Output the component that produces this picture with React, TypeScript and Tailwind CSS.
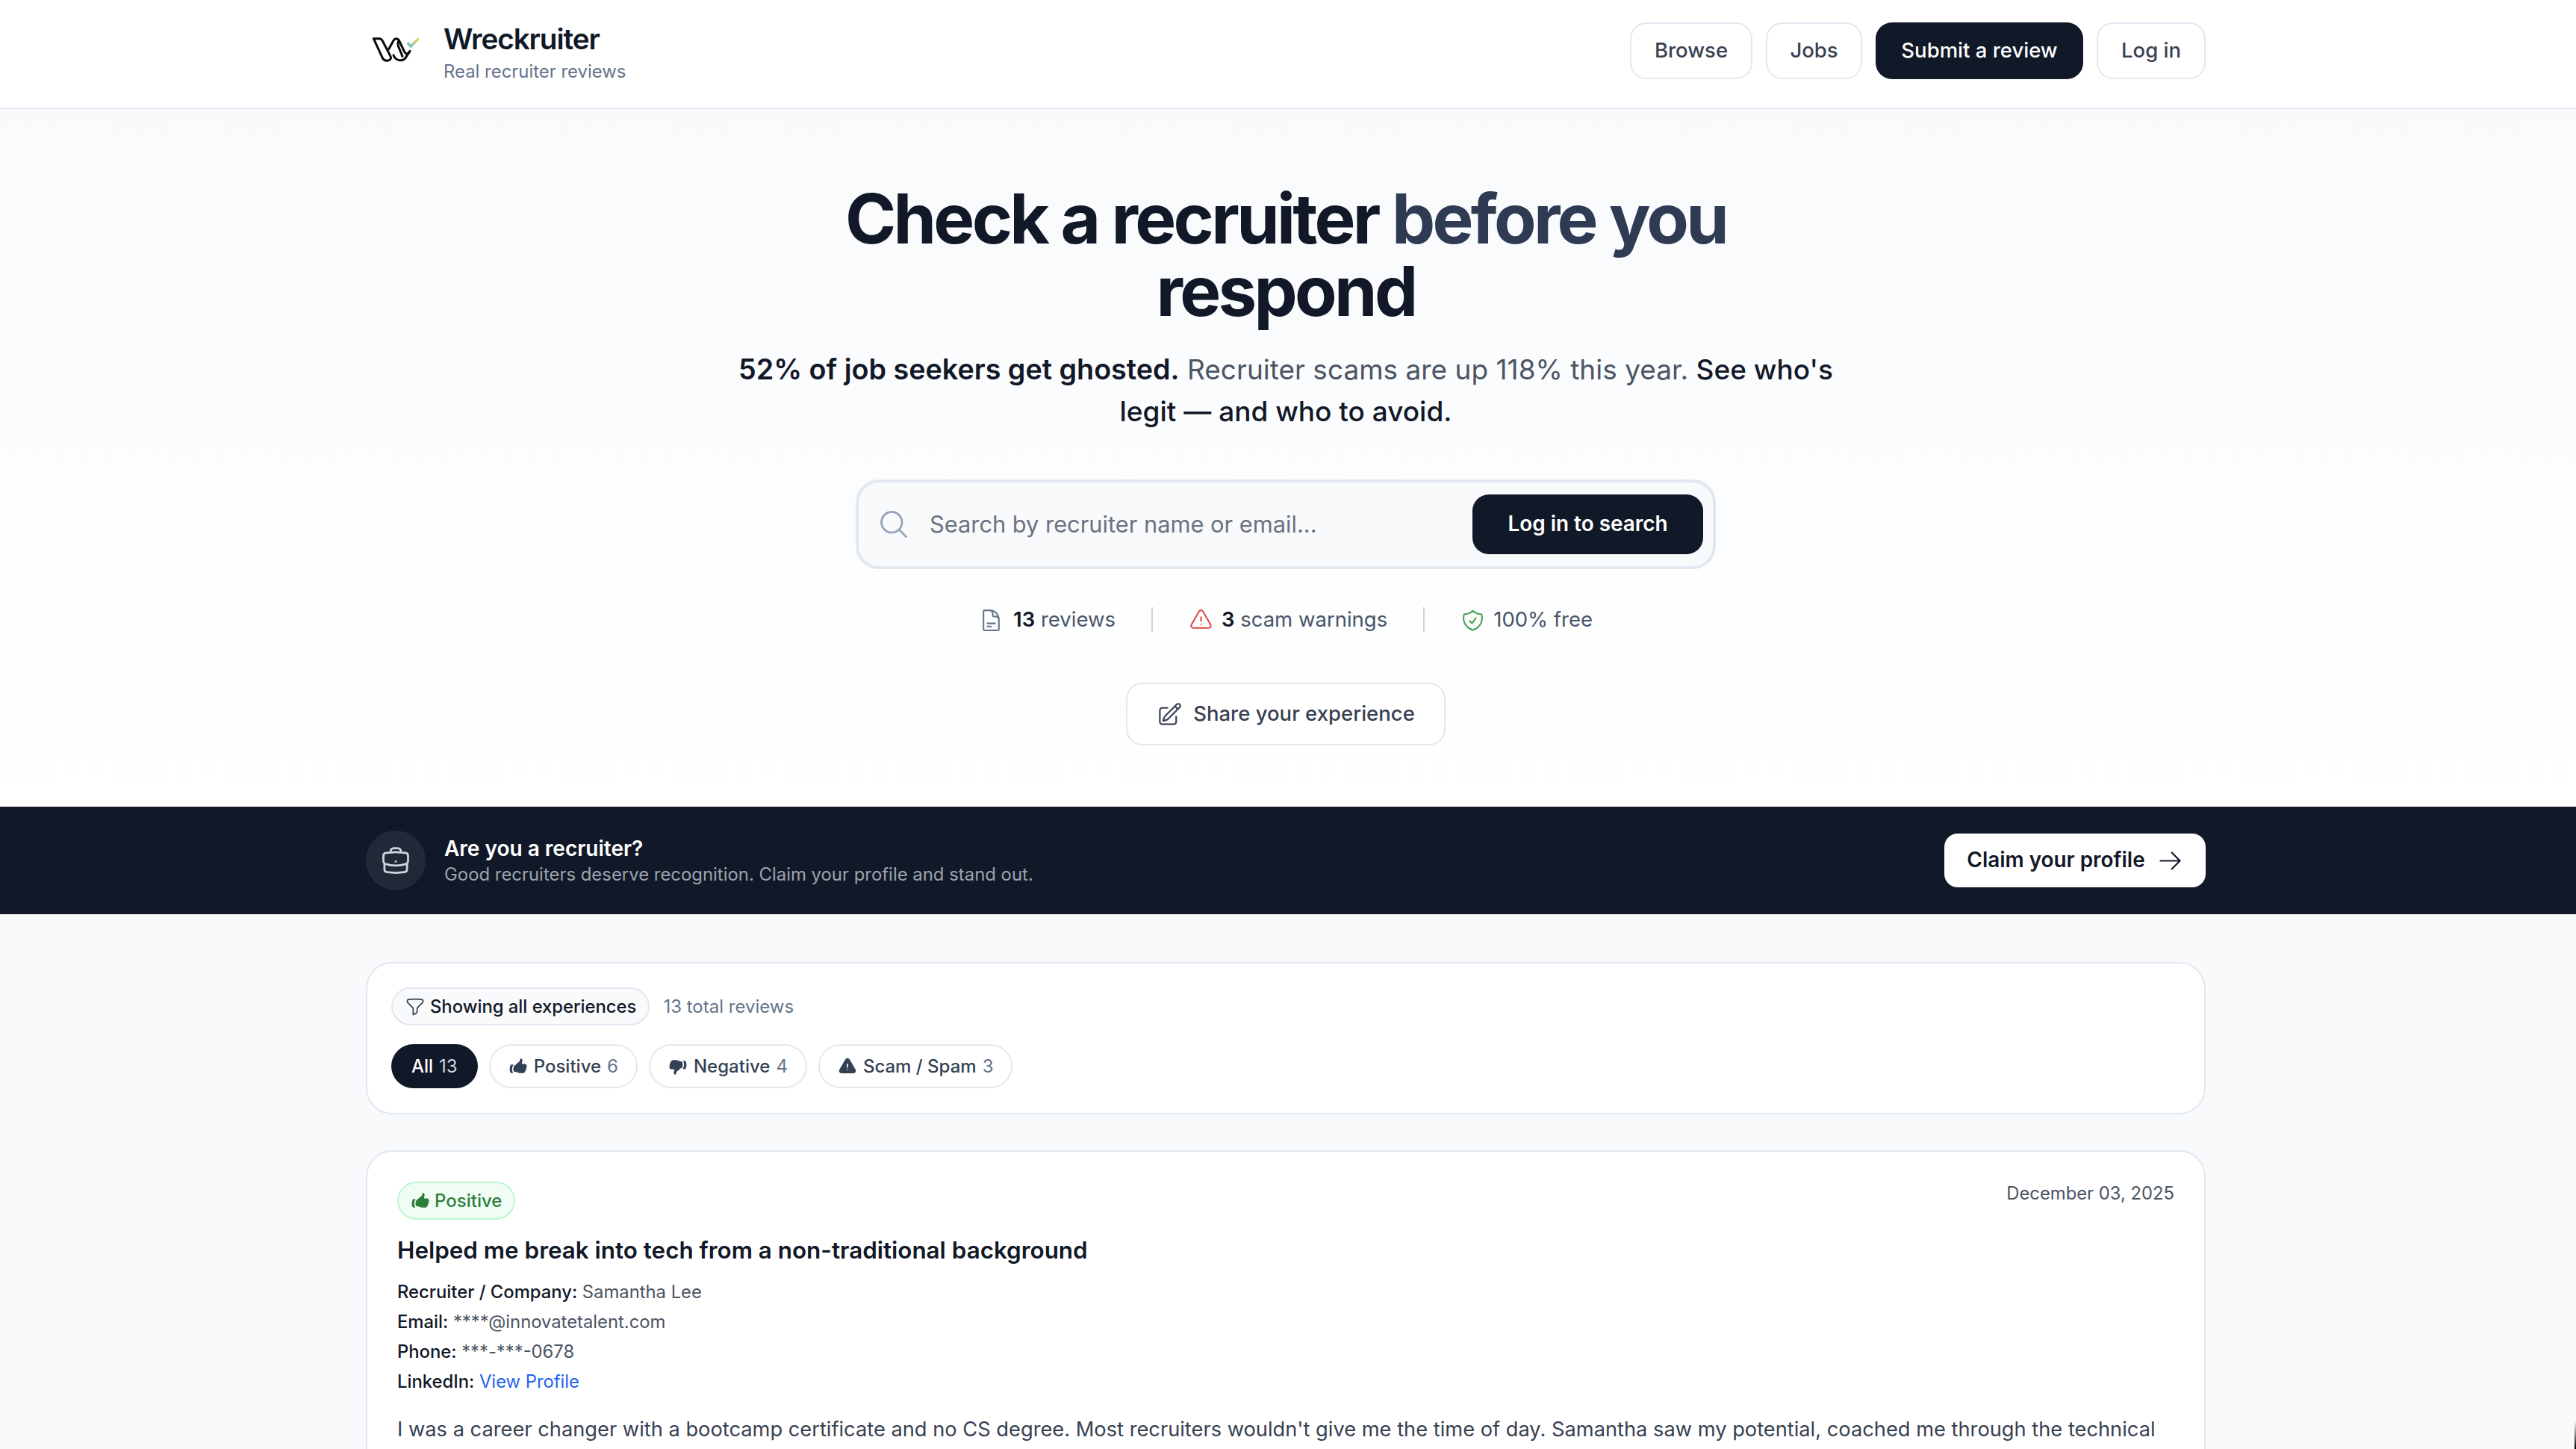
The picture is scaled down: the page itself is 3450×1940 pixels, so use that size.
import type { ReactNode } from "react";
import {
  HiExclamationTriangle,
  HiHandThumbDown,
  HiHandThumbUp,
  HiOutlineArrowRight,
  HiOutlineBriefcase,
  HiOutlineDocumentText,
  HiOutlineExclamationTriangle,
  HiOutlineFunnel,
  HiOutlineMagnifyingGlass,
  HiOutlinePencilSquare,
  HiOutlineShieldCheck,
} from "react-icons/hi2";

// Mark drawn by hand, there is no icon for it
function Logo() {
  return (
    <svg viewBox="115 148 195 108" className="mb-[10px] h-[36px] w-[65px]" fill="none">
      <defs>
        <linearGradient id="tick" x1="256" y1="187" x2="304" y2="154" gradientUnits="userSpaceOnUse">
          <stop offset="0" stopColor="#5fc0cf" />
          <stop offset="1" stopColor="#f2d34f" />
        </linearGradient>
      </defs>
      <g stroke="#0a0a0a" strokeWidth="9" strokeLinecap="round" strokeLinejoin="round">
        <path d="M122 156h22c7 0 11 3 15 11l30 58c5 9 2 17-8 19-9 2-18-1-23-10L122 156z" />
        <path d="M183 198l19-34c6-10 16-10 22-1l22 46c4 8 11 12 20 2" />
        <path d="M202 222c6 20 32 30 48 12l18-28" />
        <path d="M224 163c-6 10-5 20 0 30l14 34" />
      </g>
      <path d="M258 173l14 14 31-32" stroke="url(#tick)" strokeWidth="10" />
    </svg>
  );
}

function NavButton({ label, width, dark }: { label: string; width: string; dark?: boolean }) {
  return (
    <button className={`h-[76px] rounded-[22px] text-[27.5px] font-medium ${width} ${dark ? "bg-[#111827] text-white" : "border-2 border-[#e2e8f0] bg-white text-[#374151]"}`}>
      {label}
    </button>
  );
}

function Chip({ label, count, icon }: { label: string; count: string; icon: ReactNode }) {
  return (
    <button className="flex h-[59px] items-center gap-[8px] rounded-full border-2 border-[#e2e8f0] bg-white px-[24px] text-[24px] font-medium text-[#334155]">
      {icon}
      <span>{label}</span>
      <span className="font-normal text-[#64748b]">{count}</span>
    </button>
  );
}

export default function App() {
  return (
    <div className="relative h-screen overflow-hidden bg-[#f8fafc] font-['Inter',sans-serif] text-[#111827]">
      <header className="border-b-2 border-[#e2e8f0] bg-white pr-[6px]">
        <div className="mx-auto flex h-[144px] w-[2464px] items-center justify-between">
          <div className="flex items-center gap-[31px] pl-[8px]">
            <Logo />
            <div className="-translate-y-px">
              <div className="text-[38.7px] leading-[46px] font-semibold tracking-[-1.1px]">Wreckruiter</div>
              <div className="mt-[4px] text-[23.9px] leading-[34px] text-[#64748b]">Real recruiter reviews</div>
            </div>
          </div>
          <nav className="flex items-center gap-[18px] pb-[8px]">
            <NavButton label="Browse" width="w-[164px]" />
            <NavButton label="Jobs" width="w-[129px]" />
            <NavButton label="Submit a review" width="w-[278px]" dark />
            <NavButton label="Log in" width="w-[146px]" />
          </nav>
        </div>
      </header>

      <section className="flex h-[934px] flex-col items-center bg-gradient-to-b from-[#f8fafc] to-white pt-[98px] pr-[6px]">
        <h1 className="w-[1400px] text-center text-[92.4px] leading-[97px] font-bold tracking-[-3.7px]">
          Check a recruiter <span className="text-[#2f3b52]">before you</span> respond
        </h1>
        <p className="mt-[28px] w-[1540px] text-center text-[37px] leading-[56px] text-[#4b5563]">
          <span className="text-[37.7px] font-semibold text-[#111827]">52% of job seekers get ghosted.</span> Recruiter scams are up 118% this year.{" "}
          <span className="font-medium text-[#111827]">See who's legit — and who to avoid.</span>
        </p>
        <div className="mt-[63px] flex h-[120px] w-[1152px] items-center rounded-[31px] border-4 border-[#e2e8f0] bg-[#f8fafc] pr-[13px] pl-[25px]">
          <HiOutlineMagnifyingGlass className="size-[44px] text-[#94a3b8]" />
          <span className="ml-[26px] flex-1 text-[30.8px] text-[#6b7280]">Search by recruiter name or email...</span>
          <button className="h-[80px] w-[309px] rounded-[22px] bg-[#111827] text-[27.9px] font-semibold text-white">Log in to search</button>
        </div>
        <div className="mt-[50px] flex h-[36px] items-center text-[27.5px] text-[#475569]">
          <HiOutlineDocumentText className="mr-[13px] size-[33px] text-[#64748b]" />
          <span><b className="font-semibold text-[#111827]">13</b> reviews</span>
          <div className="mx-[48px] h-[34px] w-[2px] bg-[#cbd5e1]" />
          <HiOutlineExclamationTriangle className="mr-[11px] size-[33px] text-[#dc4a4a]" />
          <span><b className="font-semibold text-[#111827]">3</b> scam warnings</span>
          <div className="mx-[48px] h-[34px] w-[2px] bg-[#cbd5e1]" />
          <HiOutlineShieldCheck className="mr-[11px] size-[33px] text-[#43a354]" />
          <span>100% free</span>
        </div>
        <button className="mt-[66px] flex h-[84px] w-[428px] items-center justify-center gap-[14px] rounded-[22px] border-2 border-[#e2e8f0] bg-white text-[27.5px] font-medium text-[#374151]">
          <HiOutlinePencilSquare className="size-[35px]" />
          Share your experience
        </button>
      </section>

      <section className="bg-[#111827] pr-[6px]">
        <div className="mx-auto flex h-[144px] w-[2464px] items-center justify-between">
          <div className="flex items-center gap-[25px]">
            <div className="flex size-[80px] items-center justify-center rounded-full bg-[#1f2937]">
              <HiOutlineBriefcase className="size-[44px] text-[#d1d5db]" />
            </div>
            <div>
              <div className="text-[28px] leading-[38px] font-semibold text-white">Are you a recruiter?</div>
              <div className="text-[23.9px] leading-[32px] text-[#9ca3af]">Good recruiters deserve recognition. Claim your profile and stand out.</div>
            </div>
          </div>
          <button className="flex h-[72px] w-[350px] items-center justify-center gap-[16px] rounded-[18px] bg-white text-[27.9px] font-semibold text-[#111827]">
            Claim your profile
            <HiOutlineArrowRight className="size-[35px]" />
          </button>
        </div>
      </section>

      <div className="pr-[6px]">
        <main className="mx-auto flex w-[2464px] flex-col gap-[48px] pt-[64px]">
          <div className="flex h-[204px] flex-col gap-[25px] rounded-[35px] border-2 border-[#e2e8f0] bg-white px-[32px] pt-[32px]">
            <div className="flex items-center gap-[18px]">
              <div className="flex h-[51px] items-center gap-[6px] rounded-full border-2 border-[#e2e8f0] bg-[#f8fafc] px-[16px] text-[23.8px] font-medium">
                <HiOutlineFunnel className="size-[28px] text-[#374151]" />
                Showing all experiences
              </div>
              <span className="text-[24px] text-[#64748b]">13 total reviews</span>
            </div>
            <div className="flex items-center gap-[15px]">
              <button className="flex h-[59px] items-center gap-[8px] rounded-full bg-[#111827] px-[27px] text-[24px] font-medium text-white">All <span className="font-normal text-[#cbd5e1]">13</span></button>
              <Chip label="Positive" count="6" icon={<HiHandThumbUp className="size-[26px] text-[#334155]" />} />
              <Chip label="Negative" count="4" icon={<HiHandThumbDown className="size-[26px] text-[#334155]" />} />
              <Chip label="Scam / Spam" count="3" icon={<HiExclamationTriangle className="size-[26px] text-[#334155]" />} />
            </div>
          </div>

          <article className="rounded-[35px] border-2 border-[#e2e8f0] bg-white px-[40px] pt-[40px]">
            <div className="flex items-start justify-between">
              <div className="flex h-[51px] items-center gap-[6px] rounded-full border-2 border-[#bbf7d0] bg-[#f0fdf4] px-[16px] text-[24px] font-medium text-[#2f7d3b]">
                <HiHandThumbUp className="size-[26px]" />
                Positive
              </div>
              <span className="-mt-[2px] text-[23.8px] text-[#4b5563]">December 03, 2025</span>
            </div>
            <h2 className="mt-[18px] text-[31.4px] leading-[46px] font-semibold">Helped me break into tech from a non-traditional background</h2>
            <div className="mt-[13px] text-[23.8px] leading-[40px] text-[#4b5563]">
              <div><b className="font-medium text-[#111827]">Recruiter / Company:</b> Samantha Lee</div>
              <div><b className="font-medium text-[#111827]">Email:</b> ****@innovatetalent.com</div>
              <div><b className="font-medium text-[#111827]">Phone:</b> ***-***-0678</div>
              <div><b className="font-medium text-[#111827]">LinkedIn:</b> <span className="text-[#2563eb]">View Profile</span></div>
            </div>
            <p className="mt-[21px] text-[27.25px] leading-[46px] text-[#374151]">
              I was a career changer with a bootcamp certificate and no CS degree. Most recruiters wouldn't give me the time of day. Samantha saw my potential, coached me through the technical interviews and never once made me feel like I was less qualified than anyone else in the pipeline.
            </p>
          </article>
        </main>
      </div>

      <div className="absolute right-0 bottom-0 h-[38px] w-[2px] bg-gradient-to-b from-transparent to-black" />
    </div>
  );
}
